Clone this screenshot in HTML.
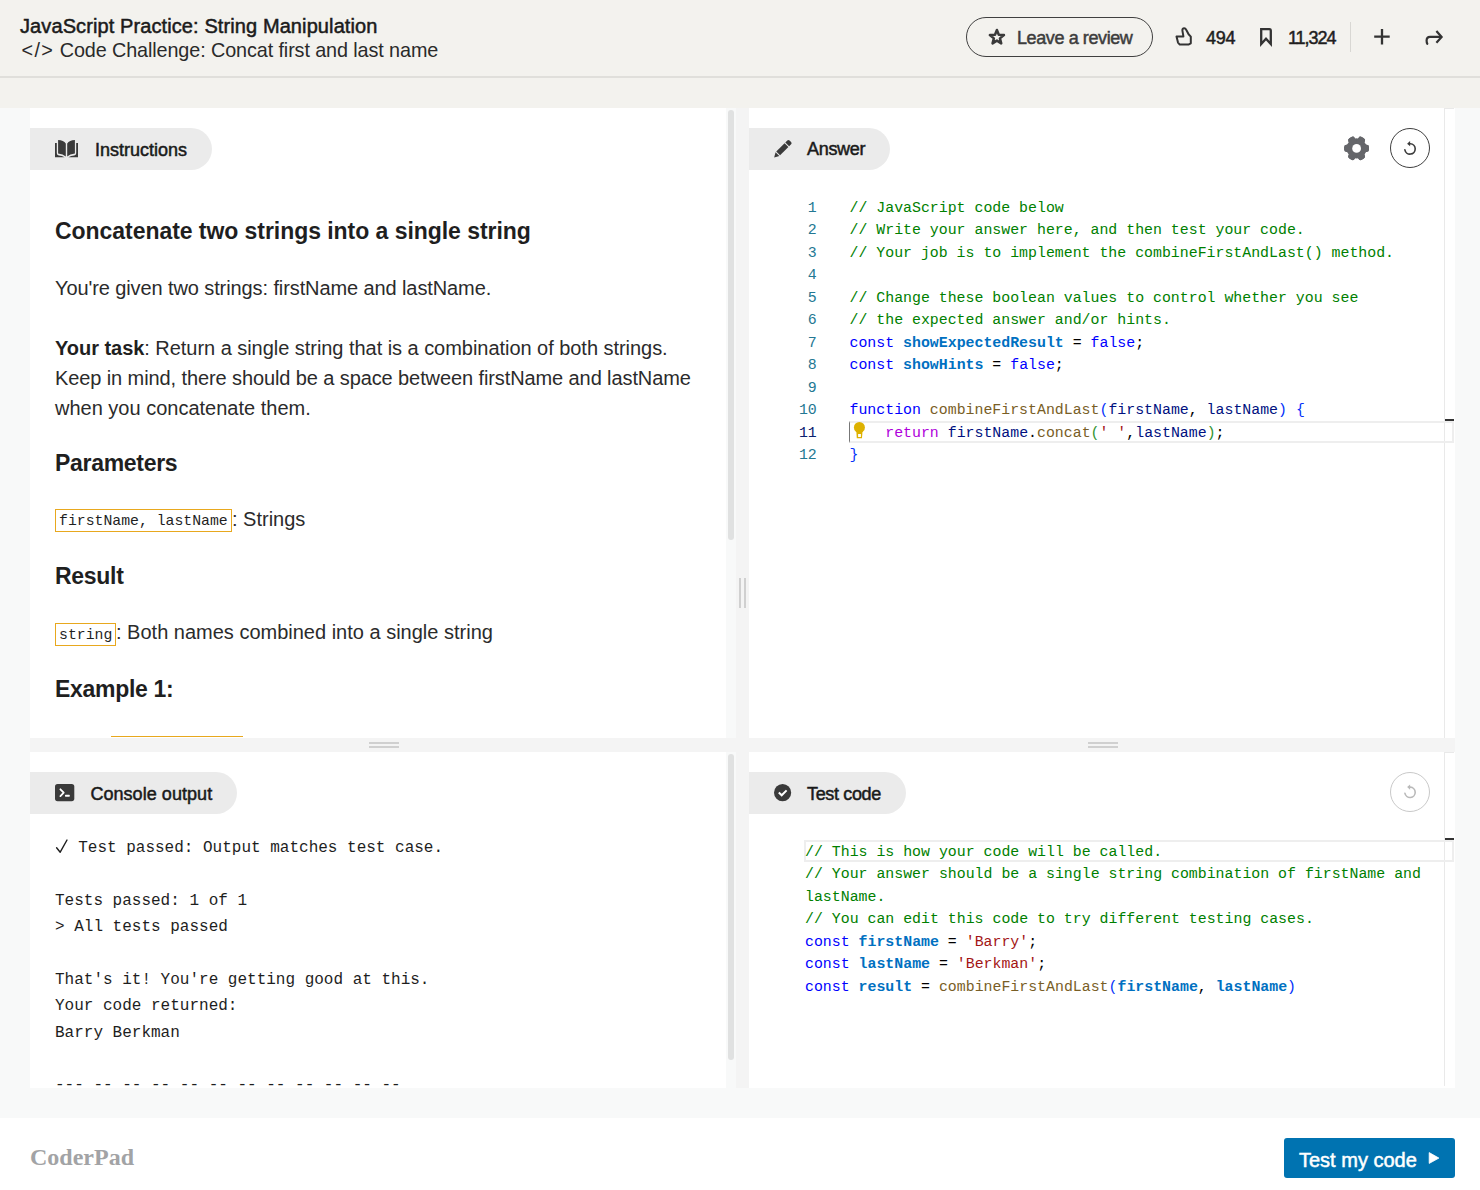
<!DOCTYPE html>
<html><head><meta charset="utf-8">
<style>
html,body{margin:0;padding:0;}
body{width:1480px;height:1190px;position:relative;overflow:hidden;background:#f8f9f9;font-family:"Liberation Sans",sans-serif;}
.a{position:absolute;box-sizing:content-box;}
.t{position:absolute;white-space:pre;}
</style></head><body>
<div class="a" style="left:0px;top:0px;width:1480px;height:108px;background:#f3f2ee;"></div>
<div class="a" style="left:0px;top:76px;width:1480px;height:2px;background:#e0dfdb;"></div>
<div class="a" style="left:30px;top:108px;width:696px;height:630px;background:#fff;"></div>
<div class="a" style="left:726px;top:108px;width:10px;height:630px;background:#f8f9f9;"></div>
<div class="a" style="left:736px;top:108px;width:13px;height:630px;background:#f4f4f4;"></div>
<div class="a" style="left:749px;top:108px;width:706px;height:630px;background:#fff;"></div>
<div class="a" style="left:30px;top:738px;width:1425px;height:14px;background:#f4f4f4;"></div>
<div class="a" style="left:30px;top:752px;width:696px;height:336px;background:#fff;"></div>
<div class="a" style="left:726px;top:752px;width:10px;height:336px;background:#f8f9f9;"></div>
<div class="a" style="left:736px;top:752px;width:13px;height:336px;background:#f4f4f4;"></div>
<div class="a" style="left:749px;top:752px;width:706px;height:336px;background:#fff;"></div>
<div class="a" style="left:0px;top:1118px;width:1480px;height:72px;background:#ffffff;"></div>
<div class="a" style="left:728px;top:110px;width:6px;height:430px;background:#e0e1e1;border-radius:3px;"></div>
<div class="a" style="left:728px;top:754px;width:6px;height:306px;background:#e0e1e1;border-radius:3px;"></div>
<div class="a" style="left:739px;top:578px;width:2px;height:30px;background:#d0d0d0;"></div>
<div class="a" style="left:744px;top:578px;width:2px;height:30px;background:#d0d0d0;"></div>
<div class="a" style="left:369px;top:742px;width:30px;height:2px;background:#d0d0d0;"></div>
<div class="a" style="left:369px;top:746px;width:30px;height:2px;background:#d0d0d0;"></div>
<div class="a" style="left:1088px;top:742px;width:30px;height:2px;background:#d0d0d0;"></div>
<div class="a" style="left:1088px;top:746px;width:30px;height:2px;background:#d0d0d0;"></div>
<div class="a" style="left:1444px;top:108px;width:1px;height:630px;background:#e9e9e9;"></div>
<div class="a" style="left:1444px;top:752px;width:1px;height:334px;background:#e9e9e9;border-radius:0 0 1px 1px;"></div>
<div class="a" style="left:1444px;top:108px;width:10px;height:1px;background:#e9e9e9;"></div>
<div class="a" style="left:1444px;top:752px;width:10px;height:1px;background:#e9e9e9;"></div>
<div class="t" style="left:20px;top:15.77px;font-family:'Liberation Sans',sans-serif;font-size:20px;line-height:20px;font-weight:normal;color:#1b1b1b;letter-spacing:0.1px;-webkit-text-stroke:0.5px #1b1b1b;">JavaScript Practice: String Manipulation</div>
<div class="t" style="left:21.5px;top:40.84px;font-family:'Liberation Sans',sans-serif;font-size:19.8px;line-height:19.8px;font-weight:normal;color:#2a2a2a;letter-spacing:-0.1px;"><span style="letter-spacing:1.4px">&lt;/&gt;</span> Code Challenge: Concat first and last name</div>
<div class="a" style="left:966px;top:17px;width:185px;height:38px;border:1px solid #404040;border-radius:20px;"></div>
<div class="t" style="left:1017px;top:28.56px;font-family:'Liberation Sans',sans-serif;font-size:18px;line-height:18px;font-weight:normal;color:#3d3d3d;letter-spacing:-0.4px;-webkit-text-stroke:0.5px #3d3d3d;">Leave a review</div>
<div class="t" style="left:1206px;top:28.76px;font-family:'Liberation Sans',sans-serif;font-size:18px;line-height:18px;font-weight:normal;color:#1f1f1f;letter-spacing:-0.2px;-webkit-text-stroke:0.5px #1f1f1f;">494</div>
<div class="t" style="left:1288px;top:28.76px;font-family:'Liberation Sans',sans-serif;font-size:18px;line-height:18px;font-weight:normal;color:#1f1f1f;letter-spacing:-1.05px;-webkit-text-stroke:0.5px #1f1f1f;">11,324</div>
<div class="a" style="left:1350px;top:22px;width:1px;height:30px;background:#d8d7d3;"></div>
<div class="a" style="left:30px;top:128px;width:182px;height:42px;background:#ebebeb;border-radius:0 21px 21px 0;"></div>
<div class="t" style="left:95px;top:140.96px;font-family:'Liberation Sans',sans-serif;font-size:18px;line-height:18px;font-weight:normal;color:#1a1a1a;letter-spacing:0px;-webkit-text-stroke:0.5px #1a1a1a;">Instructions</div>
<div class="a" style="left:749px;top:128px;width:141px;height:42px;background:#ebebeb;border-radius:0 21px 21px 0;"></div>
<div class="t" style="left:807px;top:140.46px;font-family:'Liberation Sans',sans-serif;font-size:18px;line-height:18px;font-weight:normal;color:#1a1a1a;letter-spacing:-0.3px;-webkit-text-stroke:0.5px #1a1a1a;">Answer</div>
<div class="a" style="left:30px;top:772px;width:207px;height:42px;background:#ebebeb;border-radius:0 21px 21px 0;"></div>
<div class="t" style="left:90.4px;top:784.96px;font-family:'Liberation Sans',sans-serif;font-size:18px;line-height:18px;font-weight:normal;color:#1a1a1a;letter-spacing:0.05px;-webkit-text-stroke:0.5px #1a1a1a;">Console output</div>
<div class="a" style="left:749px;top:772px;width:157px;height:42px;background:#ebebeb;border-radius:0 21px 21px 0;"></div>
<div class="t" style="left:807px;top:784.76px;font-family:'Liberation Sans',sans-serif;font-size:18px;line-height:18px;font-weight:normal;color:#1a1a1a;letter-spacing:-0.35px;-webkit-text-stroke:0.5px #1a1a1a;">Test code</div>
<div class="a" style="left:1390px;top:128px;width:38px;height:38px;border:1px solid #3f3f3f;border-radius:50%;"></div>
<div class="a" style="left:1390px;top:772px;width:38px;height:38px;border:1px solid #c9c9c9;border-radius:50%;"></div>
<div class="t" style="left:55px;top:220.23px;font-family:'Liberation Sans',sans-serif;font-size:23px;line-height:23px;font-weight:bold;color:#1f1f1f;letter-spacing:-0.05px;">Concatenate two strings into a single string</div>
<div class="t" style="left:55px;top:277.57px;font-family:'Liberation Sans',sans-serif;font-size:20px;line-height:20px;font-weight:normal;color:#2b2b2b;letter-spacing:-0.1px;">You're given two strings: firstName and lastName.</div>
<div class="t" style="left:55px;top:338.07px;font-family:'Liberation Sans',sans-serif;font-size:20px;line-height:20px;font-weight:normal;color:#2b2b2b;letter-spacing:-0.04px;"><b style="color:#1f1f1f">Your task</b>: Return a single string that is a combination of both strings.</div>
<div class="t" style="left:55px;top:367.77px;font-family:'Liberation Sans',sans-serif;font-size:20px;line-height:20px;font-weight:normal;color:#2b2b2b;letter-spacing:-0.1px;">Keep in mind, there should be a space between firstName and lastName</div>
<div class="t" style="left:55px;top:397.57px;font-family:'Liberation Sans',sans-serif;font-size:20px;line-height:20px;font-weight:normal;color:#2b2b2b;letter-spacing:0px;">when you concatenate them.</div>
<div class="t" style="left:55px;top:452.43px;font-family:'Liberation Sans',sans-serif;font-size:23px;line-height:23px;font-weight:bold;color:#1f1f1f;letter-spacing:-0.3px;">Parameters</div>
<div class="a" style="left:55px;top:509px;width:175px;height:21px;border:1px solid #e8a81e;"></div>
<div class="t" style="left:59px;top:514.46px;font-family:'Liberation Mono',monospace;font-size:14.8px;line-height:14.8px;font-weight:normal;color:#1f1f1f;letter-spacing:0px;">firstName, lastName</div>
<div class="t" style="left:232px;top:509.27px;font-family:'Liberation Sans',sans-serif;font-size:20px;line-height:20px;font-weight:normal;color:#2b2b2b;letter-spacing:0px;">: Strings</div>
<div class="t" style="left:55px;top:565.23px;font-family:'Liberation Sans',sans-serif;font-size:23px;line-height:23px;font-weight:bold;color:#1f1f1f;letter-spacing:-0.3px;">Result</div>
<div class="a" style="left:55px;top:623px;width:59px;height:21px;border:1px solid #e8a81e;"></div>
<div class="t" style="left:59px;top:628.26px;font-family:'Liberation Mono',monospace;font-size:14.8px;line-height:14.8px;font-weight:normal;color:#1f1f1f;letter-spacing:0px;">string</div>
<div class="t" style="left:116px;top:622.27px;font-family:'Liberation Sans',sans-serif;font-size:20px;line-height:20px;font-weight:normal;color:#2b2b2b;letter-spacing:0px;">: Both names combined into a single string</div>
<div class="t" style="left:55px;top:678.23px;font-family:'Liberation Sans',sans-serif;font-size:23px;line-height:23px;font-weight:bold;color:#1f1f1f;letter-spacing:-0.3px;">Example 1:</div>
<div class="a" style="left:111px;top:736px;width:132px;height:1px;background:#e8a81e;"></div>
<div class="a" style="left:849px;top:421px;width:602px;height:18px;border:2px solid #eeeeee;border-left:1px solid #777;"></div>
<div class="a" style="left:1445px;top:419px;width:9px;height:2px;background:#333;"></div>
<div class="t" style="left:807.87px;top:200.70px;font-family:'Liberation Mono',monospace;font-size:14.88px;line-height:14.88px;font-weight:normal;color:#237893;letter-spacing:0px;">1</div>
<div class="t" style="left:849.5px;top:200.70px;font-family:'Liberation Mono',monospace;font-size:14.88px;line-height:14.88px;font-weight:normal;color:#000;letter-spacing:0px;"><span style="color:#008000;">// JavaScript code below</span></div>
<div class="t" style="left:807.87px;top:223.20px;font-family:'Liberation Mono',monospace;font-size:14.88px;line-height:14.88px;font-weight:normal;color:#237893;letter-spacing:0px;">2</div>
<div class="t" style="left:849.5px;top:223.20px;font-family:'Liberation Mono',monospace;font-size:14.88px;line-height:14.88px;font-weight:normal;color:#000;letter-spacing:0px;"><span style="color:#008000;">// Write your answer here, and then test your code.</span></div>
<div class="t" style="left:807.87px;top:245.70px;font-family:'Liberation Mono',monospace;font-size:14.88px;line-height:14.88px;font-weight:normal;color:#237893;letter-spacing:0px;">3</div>
<div class="t" style="left:849.5px;top:245.70px;font-family:'Liberation Mono',monospace;font-size:14.88px;line-height:14.88px;font-weight:normal;color:#000;letter-spacing:0px;"><span style="color:#008000;">// Your job is to implement the combineFirstAndLast() method.</span></div>
<div class="t" style="left:807.87px;top:268.20px;font-family:'Liberation Mono',monospace;font-size:14.88px;line-height:14.88px;font-weight:normal;color:#237893;letter-spacing:0px;">4</div>
<div class="t" style="left:807.87px;top:290.70px;font-family:'Liberation Mono',monospace;font-size:14.88px;line-height:14.88px;font-weight:normal;color:#237893;letter-spacing:0px;">5</div>
<div class="t" style="left:849.5px;top:290.70px;font-family:'Liberation Mono',monospace;font-size:14.88px;line-height:14.88px;font-weight:normal;color:#000;letter-spacing:0px;"><span style="color:#008000;">// Change these boolean values to control whether you see</span></div>
<div class="t" style="left:807.87px;top:313.20px;font-family:'Liberation Mono',monospace;font-size:14.88px;line-height:14.88px;font-weight:normal;color:#237893;letter-spacing:0px;">6</div>
<div class="t" style="left:849.5px;top:313.20px;font-family:'Liberation Mono',monospace;font-size:14.88px;line-height:14.88px;font-weight:normal;color:#000;letter-spacing:0px;"><span style="color:#008000;">// the expected answer and/or hints.</span></div>
<div class="t" style="left:807.87px;top:335.70px;font-family:'Liberation Mono',monospace;font-size:14.88px;line-height:14.88px;font-weight:normal;color:#237893;letter-spacing:0px;">7</div>
<div class="t" style="left:849.5px;top:335.70px;font-family:'Liberation Mono',monospace;font-size:14.88px;line-height:14.88px;font-weight:normal;color:#000;letter-spacing:0px;"><span style="color:#0000ff;">const</span> <span style="color:#0070c1;font-weight:bold;">showExpectedResult</span> = <span style="color:#0000ff;">false</span>;</div>
<div class="t" style="left:807.87px;top:358.20px;font-family:'Liberation Mono',monospace;font-size:14.88px;line-height:14.88px;font-weight:normal;color:#237893;letter-spacing:0px;">8</div>
<div class="t" style="left:849.5px;top:358.20px;font-family:'Liberation Mono',monospace;font-size:14.88px;line-height:14.88px;font-weight:normal;color:#000;letter-spacing:0px;"><span style="color:#0000ff;">const</span> <span style="color:#0070c1;font-weight:bold;">showHints</span> = <span style="color:#0000ff;">false</span>;</div>
<div class="t" style="left:807.87px;top:380.70px;font-family:'Liberation Mono',monospace;font-size:14.88px;line-height:14.88px;font-weight:normal;color:#237893;letter-spacing:0px;">9</div>
<div class="t" style="left:798.94px;top:403.20px;font-family:'Liberation Mono',monospace;font-size:14.88px;line-height:14.88px;font-weight:normal;color:#237893;letter-spacing:0px;">10</div>
<div class="t" style="left:849.5px;top:403.20px;font-family:'Liberation Mono',monospace;font-size:14.88px;line-height:14.88px;font-weight:normal;color:#000;letter-spacing:0px;"><span style="color:#0000ff;">function</span> <span style="color:#795e26;">combineFirstAndLast</span><span style="color:#0431fa;">(</span><span style="color:#001080;">firstName</span>, <span style="color:#001080;">lastName</span><span style="color:#0431fa;">)</span> <span style="color:#0431fa;">{</span></div>
<div class="t" style="left:798.94px;top:425.70px;font-family:'Liberation Mono',monospace;font-size:14.88px;line-height:14.88px;font-weight:normal;color:#0b216f;letter-spacing:0px;">11</div>
<div class="t" style="left:849.5px;top:425.70px;font-family:'Liberation Mono',monospace;font-size:14.88px;line-height:14.88px;font-weight:normal;color:#000;letter-spacing:0px;">    <span style="color:#af00db;">return</span> <span style="color:#001080;">firstName</span>.<span style="color:#795e26;">concat</span><span style="color:#319331;">(</span><span style="color:#a31515;">' '</span>,<span style="color:#001080;">lastName</span><span style="color:#319331;">)</span>;</div>
<div class="t" style="left:798.94px;top:448.20px;font-family:'Liberation Mono',monospace;font-size:14.88px;line-height:14.88px;font-weight:normal;color:#237893;letter-spacing:0px;">12</div>
<div class="t" style="left:849.5px;top:448.20px;font-family:'Liberation Mono',monospace;font-size:14.88px;line-height:14.88px;font-weight:normal;color:#000;letter-spacing:0px;"><span style="color:#0431fa;">}</span></div>
<div class="a" style="left:804px;top:840px;width:646px;height:18px;border:2px solid #eeeeee;"></div>
<div class="a" style="left:1445px;top:838px;width:9px;height:2px;background:#333;"></div>
<div class="t" style="left:805px;top:844.50px;font-family:'Liberation Mono',monospace;font-size:14.88px;line-height:14.88px;font-weight:normal;color:#000;letter-spacing:0px;"><span style="color:#008000;">// This is how your code will be called.</span></div>
<div class="t" style="left:805px;top:867.00px;font-family:'Liberation Mono',monospace;font-size:14.88px;line-height:14.88px;font-weight:normal;color:#000;letter-spacing:0px;"><span style="color:#008000;">// Your answer should be a single string combination of firstName and</span></div>
<div class="t" style="left:805px;top:889.50px;font-family:'Liberation Mono',monospace;font-size:14.88px;line-height:14.88px;font-weight:normal;color:#000;letter-spacing:0px;"><span style="color:#008000;">lastName.</span></div>
<div class="t" style="left:805px;top:912.00px;font-family:'Liberation Mono',monospace;font-size:14.88px;line-height:14.88px;font-weight:normal;color:#000;letter-spacing:0px;"><span style="color:#008000;">// You can edit this code to try different testing cases.</span></div>
<div class="t" style="left:805px;top:934.50px;font-family:'Liberation Mono',monospace;font-size:14.88px;line-height:14.88px;font-weight:normal;color:#000;letter-spacing:0px;"><span style="color:#0000ff;">const</span> <span style="color:#0070c1;font-weight:bold;">firstName</span> = <span style="color:#a31515;">'Barry'</span>;</div>
<div class="t" style="left:805px;top:957.00px;font-family:'Liberation Mono',monospace;font-size:14.88px;line-height:14.88px;font-weight:normal;color:#000;letter-spacing:0px;"><span style="color:#0000ff;">const</span> <span style="color:#0070c1;font-weight:bold;">lastName</span> = <span style="color:#a31515;">'Berkman'</span>;</div>
<div class="t" style="left:805px;top:979.50px;font-family:'Liberation Mono',monospace;font-size:14.88px;line-height:14.88px;font-weight:normal;color:#000;letter-spacing:0px;"><span style="color:#0000ff;">const</span> <span style="color:#0070c1;font-weight:bold;">result</span> = <span style="color:#795e26;">combineFirstAndLast</span><span style="color:#0431fa;">(</span><span style="color:#0070c1;font-weight:bold;">firstName</span>, <span style="color:#0070c1;font-weight:bold;">lastName</span><span style="color:#0431fa;">)</span></div>
<div class="t" style="left:55px;top:840.34px;font-family:'Liberation Mono',monospace;font-size:16px;line-height:16px;font-weight:normal;color:#1e1e1e;letter-spacing:0px;"><span style="display:inline-block;width:13.6px"> </span> Test passed: Output matches test case.</div>
<div class="t" style="left:55px;top:893.04px;font-family:'Liberation Mono',monospace;font-size:16px;line-height:16px;font-weight:normal;color:#1e1e1e;letter-spacing:0px;">Tests passed: 1 of 1</div>
<div class="t" style="left:55px;top:919.39px;font-family:'Liberation Mono',monospace;font-size:16px;line-height:16px;font-weight:normal;color:#1e1e1e;letter-spacing:0px;">&gt; All tests passed</div>
<div class="t" style="left:55px;top:972.09px;font-family:'Liberation Mono',monospace;font-size:16px;line-height:16px;font-weight:normal;color:#1e1e1e;letter-spacing:0px;">That's it! You're getting good at this.</div>
<div class="t" style="left:55px;top:998.44px;font-family:'Liberation Mono',monospace;font-size:16px;line-height:16px;font-weight:normal;color:#1e1e1e;letter-spacing:0px;">Your code returned:</div>
<div class="t" style="left:55px;top:1024.79px;font-family:'Liberation Mono',monospace;font-size:16px;line-height:16px;font-weight:normal;color:#1e1e1e;letter-spacing:0px;">Barry Berkman</div>
<div class="t" style="left:55px;top:1077.49px;font-family:'Liberation Mono',monospace;font-size:16px;line-height:16px;font-weight:normal;color:#1e1e1e;letter-spacing:0px;">--- -- -- -- -- -- -- -- -- -- -- --</div>
<div class="a" style="left:30px;top:1088px;width:1425px;height:30px;background:#f8f9f9;"></div>
<div class="a" style="left:0px;top:1088px;width:30px;height:30px;background:#f8f9f9;"></div>
<div class="t" style="left:30px;top:1145.20px;font-family:'Liberation Serif',serif;font-size:24px;line-height:24px;font-weight:bold;color:#a2a3a5;letter-spacing:0px;">CoderPad</div>
<div class="a" style="left:1284px;top:1138px;width:171px;height:40px;background:#0073b1;border-radius:3px;"></div>
<div class="t" style="left:1299px;top:1149.67px;font-family:'Liberation Sans',sans-serif;font-size:20px;line-height:20px;font-weight:normal;color:#ffffff;letter-spacing:0px;-webkit-text-stroke:0.5px #ffffff;">Test my code</div>
<svg class="a" style="left:0;top:0" width="1480" height="1190"><polygon points="996.90,30.00 998.78,34.81 1003.94,35.11 999.94,38.39 1001.25,43.39 996.90,40.60 992.55,43.39 993.86,38.39 989.86,35.11 995.02,34.81" fill="none" stroke="#3a3a3a" stroke-width="2.5" stroke-linejoin="round"/><path transform="translate(1175,27)" d="M15.8 9.6 V16.3 L13.4 17.6 H4.8 L3 15.6 L2.2 12.2 L1.5 9.4 H8.4 L7.4 3.6 Q7.2 1.2 9.2 1.2 Q10.4 1.2 11.2 2.8 L13.6 7.3 Z" fill="none" stroke="#333" stroke-width="2" stroke-linejoin="round"/><path transform="translate(1260,28)" d="M1.2 16 V1.2 H9.4 Q10.8 1.2 10.8 2.6 V16 L6 10.8 Z" fill="none" stroke="#333" stroke-width="2.3" stroke-linejoin="miter"/><path d="M1374.2 36.7 H1389.7 M1382 28.9 V44.5" stroke="#333" stroke-width="2.3"/><path d="M1436.4 31 L1441.6 36.9 L1436.4 42.7" fill="none" stroke="#333" stroke-width="2.2" stroke-linejoin="miter"/><path d="M1441 36.9 H1430 Q1426.6 36.9 1426.6 40.6 Q1426.6 42.5 1427.3 43.8" fill="none" stroke="#333" stroke-width="2.2" stroke-linecap="round"/><path d="M58.1 140 Q63.6 140.1 65.8 143.6 V156.6 Q63.2 153.9 58.1 153.6 Z M55 143 H56.8 V153.3 Q56.8 155.3 58.8 155.4 Q62 155.6 64.6 157.2 H55 Z" fill="#3a3a3a"/><path transform="translate(133,0) scale(-1,1)" d="M58.1 140 Q63.6 140.1 65.8 143.6 V156.6 Q63.2 153.9 58.1 153.6 Z M55 143 H56.8 V153.3 Q56.8 155.3 58.8 155.4 Q62 155.6 64.6 157.2 H55 Z" fill="#3a3a3a"/><g transform="translate(774.2,157.4) rotate(-45)" fill="#3a3a3a"><polygon points="0,0 4.6,-2.7 4.6,2.7"/><rect x="5.6" y="-2.7" width="11.8" height="5.4"/><path d="M18.4 -2.7 H21.2 Q22.8 -2.7 22.8 -1.1 V1.1 Q22.8 2.7 21.2 2.7 H18.4 Z"/></g><circle cx="1356.6" cy="148.4" r="10.2" fill="#65666a"/><rect x="1344.2" y="144.8" width="24.8" height="7.2" rx="2.4" fill="#65666a" transform="rotate(0 1356.6 148.4)"/><rect x="1344.2" y="144.8" width="24.8" height="7.2" rx="2.4" fill="#65666a" transform="rotate(60 1356.6 148.4)"/><rect x="1344.2" y="144.8" width="24.8" height="7.2" rx="2.4" fill="#65666a" transform="rotate(120 1356.6 148.4)"/><rect x="1344.2" y="144.8" width="24.8" height="7.2" rx="2.4" fill="#65666a" transform="rotate(180 1356.6 148.4)"/><rect x="1344.2" y="144.8" width="24.8" height="7.2" rx="2.4" fill="#65666a" transform="rotate(240 1356.6 148.4)"/><rect x="1344.2" y="144.8" width="24.8" height="7.2" rx="2.4" fill="#65666a" transform="rotate(300 1356.6 148.4)"/><circle cx="1356.6" cy="148.4" r="4.4" fill="#fff"/><path d="M1404.88 149.80 A5.2 5.2 0 1 0 1410.30 143.70" fill="none" stroke="#3a3a3a" stroke-width="1.6" stroke-linecap="round"/><polygon points="1407.10,143.70 1410.10,141.10 1410.10,146.30" fill="#3a3a3a"/><path d="M1404.88 793.20 A5.2 5.2 0 1 0 1410.30 787.10" fill="none" stroke="#b9b9b9" stroke-width="1.6" stroke-linecap="round"/><polygon points="1407.10,787.10 1410.10,784.50 1410.10,789.70" fill="#b9b9b9"/><rect x="55" y="784" width="19.3" height="17.2" rx="2.6" fill="#3a3a3a"/><path d="M60.4 789.3 L63.7 792.7 L60.4 796.1" fill="none" stroke="#fff" stroke-width="1.8" stroke-linecap="round" stroke-linejoin="round"/><rect x="65" y="794.8" width="4.8" height="1.9" rx="0.6" fill="#fff"/><circle cx="782.6" cy="792.7" r="8.6" fill="#3a3a3a"/><path d="M778.8 792.6 L781.7 795.3 L786.6 790.4" fill="none" stroke="#fff" stroke-width="2"/><path d="M56.6 847.8 L60.2 852.2 L67 840" fill="none" stroke="#1e1e1e" stroke-width="1.4" stroke-linejoin="round" stroke-linecap="round"/><circle cx="859.4" cy="427.4" r="5.5" fill="#ddb100"/><path d="M856.3 431 H862.5 L862 438.3 H856.8 Z" fill="#ddb100"/><rect x="858.1" y="434" width="2.8" height="3" fill="#fff"/><path d="M1429.2 1152.6 L1438.9 1158.1 L1429.2 1163.4 Z" fill="#fff" stroke="#fff" stroke-width="0.8" stroke-linejoin="round"/></svg>
</body></html>
